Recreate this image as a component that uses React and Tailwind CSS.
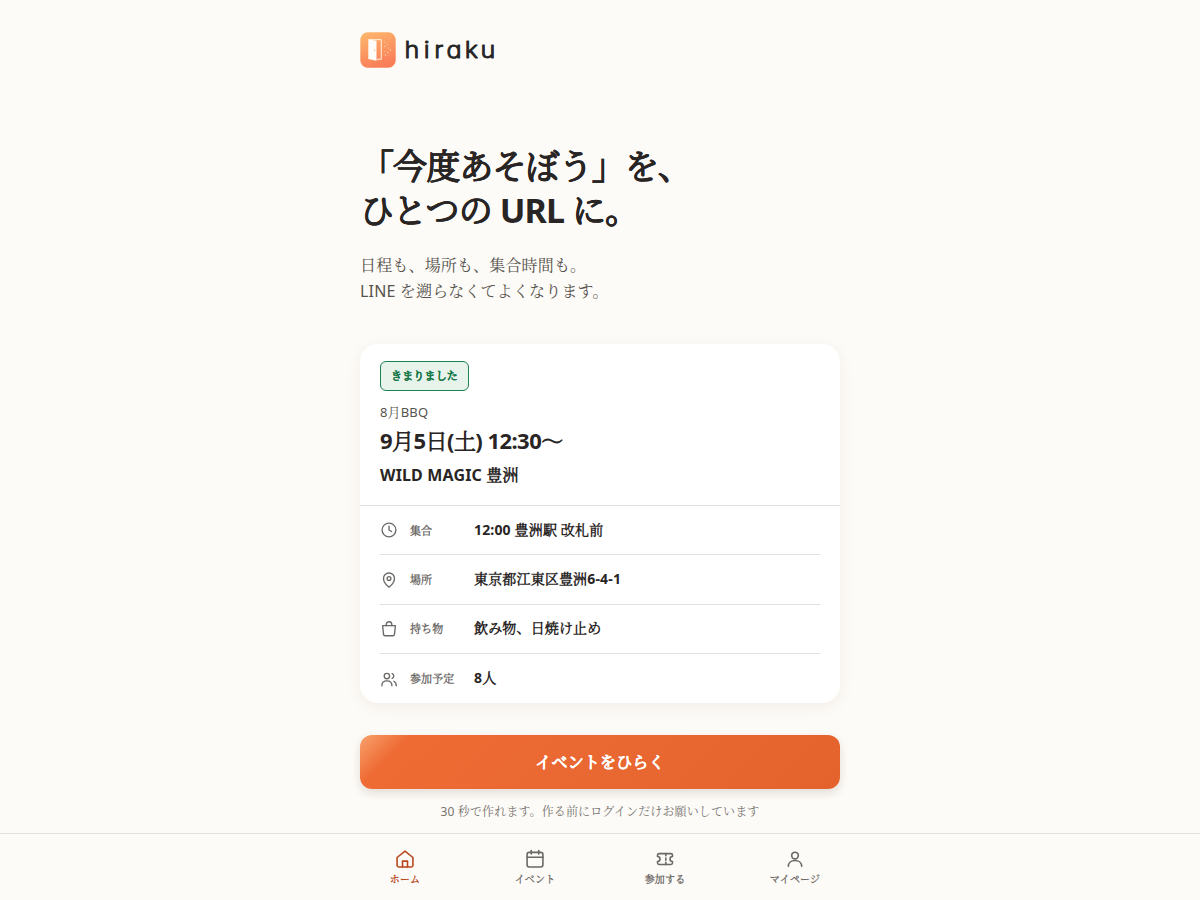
import React from "react";

function Icon({ size, width = 1.8, className = "", children }) {
  return (
    <svg
      width={size}
      height={size}
      viewBox="0 0 24 24"
      fill="none"
      stroke="currentColor"
      strokeWidth={width}
      strokeLinecap="round"
      strokeLinejoin="round"
      className={"shrink-0 " + className}
      aria-hidden="true"
    >
      {children}
    </svg>
  );
}

const clock = (
  <>
    <circle cx="12" cy="12" r="9.2" />
    <path d="M12 6.8V12l3.4 2" />
  </>
);
const pin = (
  <>
    <path d="M12 21.5s-7.3-5.7-7.3-11.6a7.3 7.3 0 0 1 14.6 0c0 5.9-7.3 11.6-7.3 11.6Z" />
    <circle cx="12" cy="10" r="2.5" />
  </>
);
const bag = (
  <>
    <path d="M3.500 7.500h17l-1.200 11.800a2 2 0 0 1-2 1.700H6.700a2 2 0 0 1-2-1.700Z" />
    <path d="M8.300 7.500V6a3.700 3.700 0 0 1 7.400 0v1.500" />
  </>
);
const people = (
  <>
    <circle cx="9.200" cy="8" r="3.600" />
    <path d="M2.500 21c0-4 2.900-6.500 6.700-6.500s6.700 2.500 6.700 6.500M16.200 4.700a3.600 3.600 0 0 1 0 6.600M18.500 15c2 1.100 3.200 3.200 3.200 6" />
  </>
);

const rows = [
  { icon: clock, label: "集合", value: "12:00 豊洲駅 改札前" },
  { icon: pin, label: "場所", value: "東京都江東区豊洲6-4-1" },
  { icon: bag, label: "持ち物", value: "飲み物、日焼け止め" },
  { icon: people, label: "参加予定", value: "8人" },
];

const tabs = [
  {
    label: "ホーム",
    active: true,
    icon: (
      <>
        <path d="M2.500 10.200 12 2.500l9.500 7.700v9.300a2 2 0 0 1-2 2h-15a2 2 0 0 1-2-2Z" />
        <path d="M9 21.500v-7h6v7" />
      </>
    ),
  },
  {
    label: "イベント",
    icon: (
      <>
        <rect x="2.500" y="4" width="19" height="17.500" rx="2.500" />
        <path d="M2.500 9.800h19M7.500 1.800V6M16.500 1.800V6" />
      </>
    ),
  },
  {
    label: "参加する",
    icon: (
      <>
        <path d="M3 7.500a2 2 0 0 1 2-2h14a2 2 0 0 1 2 2V9a3 3 0 0 0 0 6v1.500a2 2 0 0 1-2 2H5a2 2 0 0 1-2-2V15a3 3 0 0 0 0-6Z" />
        <path d="M13 5.500v2.700M13 10.800v2.700M13 16v2.500" />
      </>
    ),
  },
  {
    label: "マイページ",
    icon: (
      <>
        <circle cx="12" cy="7.800" r="4" />
        <path d="M4 20.800c0-4.400 3.400-7 8-7s8 2.600 8 7" />
      </>
    ),
  },
];

function Logo() {
  return (
    <div className="flex h-9 items-center">
      <svg width="36" height="36" viewBox="0 0 36 36" aria-hidden="true">
        <defs>
          <linearGradient id="tile" x1="0" y1="0" x2="0.35" y2="1">
            <stop offset="0" stopColor="#fdb96d" />
            <stop offset="1" stopColor="#fa7f59" />
          </linearGradient>
        </defs>
        <rect x="0.300" y="0.300" width="35.400" height="35.400" rx="7.500" fill="url(#tile)" />
        <path d="M9 7.700h12.300v19.500H17" fill="none" stroke="#fff3df" strokeWidth="1" />
        <path d="M8.300 7.300 16.500 8.700v20.100L8.300 26.900Z" fill="#fffdf8" />
        <circle cx="14.700" cy="18.300" r="0.650" fill="#f69a60" />
        <g fill="#ffe0ba">
          <circle cx="25" cy="10" r="0.600" />
          <circle cx="27.500" cy="12.500" r="0.600" />
          <circle cx="25" cy="14.500" r="0.700" />
          <circle cx="28.500" cy="16" r="0.500" />
          <circle cx="30.500" cy="18" r="0.700" />
          <circle cx="25" cy="19.500" r="0.500" />
          <circle cx="28" cy="20.500" r="0.700" />
          <circle cx="25.500" cy="23" r="0.700" />
          <circle cx="29" cy="23" r="0.400" />
        </g>
      </svg>
      <svg width="104" height="36" viewBox="0 0 104 36" role="img" aria-label="hiraku">
        <text
          transform="scale(1.12 1)"
          x="7.6 24.8 34.2 45.1 61.3 75.5"
          y="26.400"
          className="fill-[#252525] font-['Inter',sans-serif] text-[22.500px] font-light [font-feature-settings:'cv11']"
          stroke="#252525"
          strokeWidth="0.900"
          strokeLinejoin="round"
        >
          hiraku
        </text>
      </svg>
    </div>
  );
}

export default function App() {
  return (
    <div
      lang="ja"
      className="flex h-[900px] flex-col overflow-hidden bg-[#fdfbf7] font-['Noto_Sans','Noto_Serif_CJK_JP_Light','Noto_Serif_CJK_JP',sans-serif] tracking-[0.160px] text-[#292524]"
    >
      <main className="mx-auto w-[480px] flex-1 pt-8">
        <Logo />
        <h1 className="mt-[76px] text-[34px] leading-[44.200px] font-bold tracking-[-0.026em] [-webkit-text-stroke:0.300px_#292524]">
          「今度あそぼう」を、
          <br />
          ひとつの <span className="[-webkit-text-stroke:0]">URL</span> に。
        </h1>
        <p className="mt-5 font-['Noto_Sans','Noto_Serif_CJK_JP',sans-serif] text-base leading-[26px] text-[#57534e]">
          日程も、場所も、集合時間も。
          <br />
          LINE を遡らなくてよくなります。
        </p>
        <section className="mt-10 h-[359px] rounded-[18px] bg-white shadow-[0_4px_16px_rgba(60,40,20,0.06)]">
          <div className="h-[161.600px] border-b border-[#e2e0dd] px-5 pt-[17px]">
            <span className="flex h-[30px] w-[89px] items-center justify-center rounded-md border border-[#18834f] bg-[#e8f3ec] text-[11px] font-bold text-[#18794a] [-webkit-text-stroke:0.200px_#18794a]">
              きまりました
            </span>
            <p className="mt-[11px] font-['Noto_Sans','Noto_Serif_CJK_JP',sans-serif] text-[13px] leading-5 text-[#57534e]">
              8月BBQ
            </p>
            <p className="mt-[3px] text-[22px] leading-[30px] font-bold tracking-[-0.025em]">9月5日(土) 12:30〜</p>
            <p className="mt-2 text-base leading-6 font-bold">WILD MAGIC 豊洲</p>
          </div>
          <ul className="px-5">
            {rows.map((r) => (
              <li key={r.label} className="flex h-[49.350px] items-center border-b border-[#e2e0dd] last:border-0">
                <Icon size={18} className="text-[#6b6865]">
                  {r.icon}
                </Icon>
                <span className="ml-3 w-16 pt-px text-[11px] leading-[18px] font-bold tracking-[0.110px] text-[#6b6865]">
                  {r.label}
                </span>
                <span className="pb-px text-sm leading-5 font-bold">{r.value}</span>
              </li>
            ))}
          </ul>
        </section>
        <button className="mt-8 block h-[54px] w-full rounded-xl bg-[linear-gradient(135deg,#f9a16c_0,#ee6b34_36px,#e4632d_100%)] text-base font-bold tracking-[0.160px] text-white shadow-[0_4px_10px_rgba(60,30,10,0.14)] [-webkit-text-stroke:0.300px_white]">
          イベントをひらく
        </button>
        <p className="mt-[13px] text-center font-['Noto_Sans','Noto_Serif_CJK_JP',sans-serif] text-xs leading-5 tracking-[0.130px] text-[#777370]">
          30 秒で作れます。作る前にログインだけお願いしています
        </p>
      </main>
      <nav className="h-[67px] shrink-0 border-t border-[#e2e0dd]">
        <div className="mx-auto grid w-[520px] grid-cols-4 pt-[15px]">
          {tabs.map((t) => (
            <a
              key={t.label}
              className={
                t.active
                  ? "flex flex-col items-center gap-px text-[10px] leading-[18px] font-bold text-[#b9471c]"
                  : "flex flex-col items-center gap-px text-[10px] leading-[18px] font-bold text-[#6b6865]"
              }
            >
              <Icon size={20} width={1.9}>
                {t.icon}
              </Icon>
              <span>{t.label}</span>
            </a>
          ))}
        </div>
      </nav>
    </div>
  );
}
